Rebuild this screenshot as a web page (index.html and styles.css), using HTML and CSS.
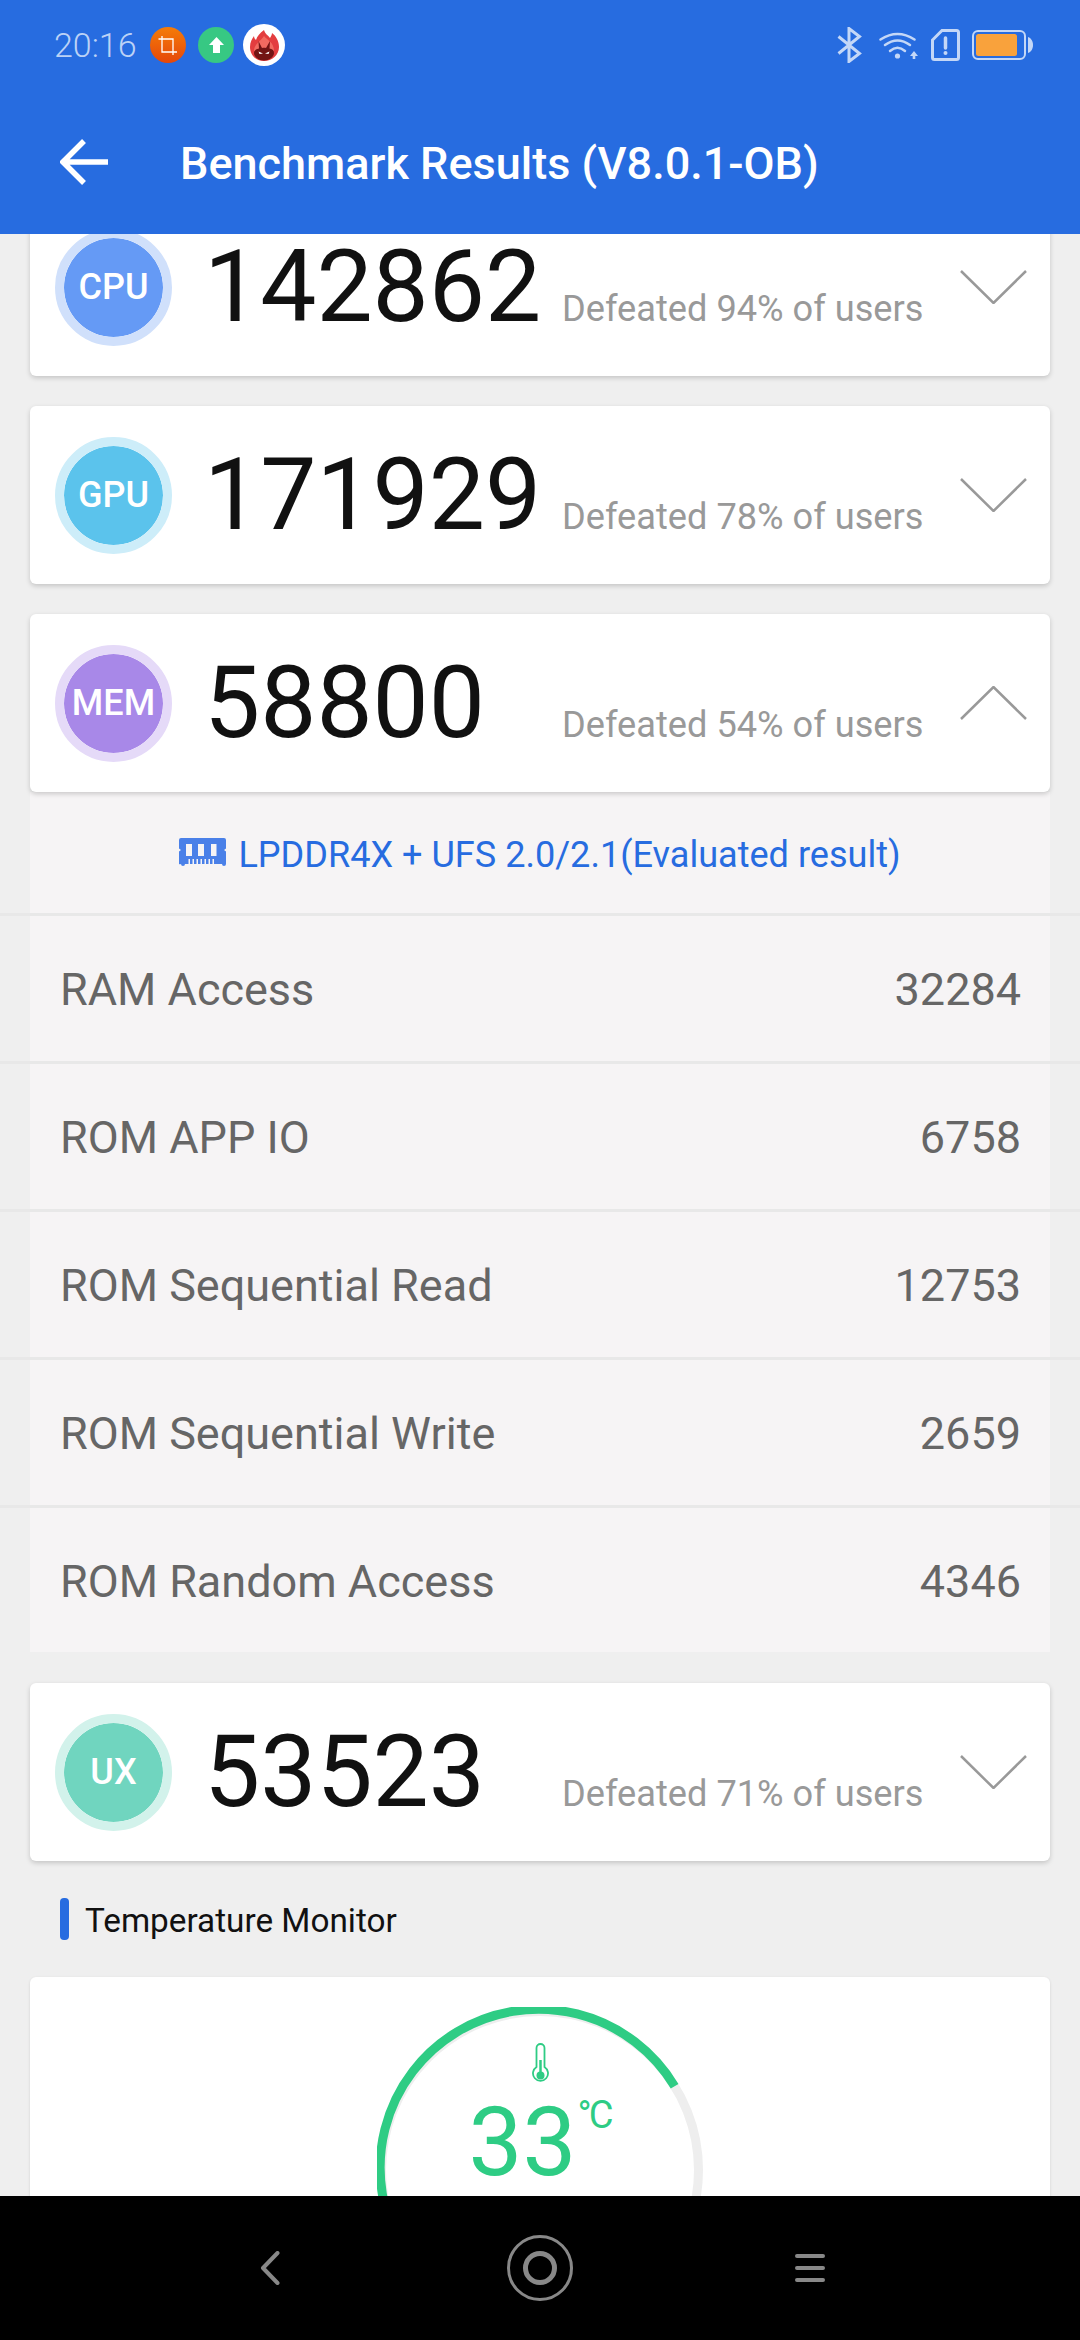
FILE: index.html
```html
<!DOCTYPE html>
<html lang="en">
<head>
<meta charset="utf-8">
<title>Benchmark Results</title>
<link rel="stylesheet" href="styles.css">
</head>
<body>
<div class="app">
  <header class="header">
    <div class="status">
      <span class="time">20:16</span>
      <svg class="ic-crop" viewBox="0 0 36 36"><defs><linearGradient id="og" x1="0" y1="0" x2="0" y2="1"><stop offset="0" stop-color="#f57c08"/><stop offset="1" stop-color="#e5470a"/></linearGradient></defs><circle cx="18" cy="18" r="18" fill="url(#og)"/><path d="M8.500 12H23V28M12 9V25H27" fill="none" stroke="#fff" stroke-width="1.300"/></svg>
      <svg class="ic-up" viewBox="0 0 36 36"><circle cx="18" cy="18" r="18" fill="#37c883"/><path d="M18.500 10l7.500 8h-4v8h-7v-8h-4z" fill="#fff"/></svg>
      <svg class="ic-logo" viewBox="0 0 42 42"><circle cx="21" cy="21" r="21" fill="#fff"/><path d="M21 6C22 10 25 11 27 14C28 12 29 11 29 9C33 12 36 17 36 23C36 31 29 37 21 37C13 37 7 31 7 23C7 18 9 15 11 12C11 14 12 15 13 16C14 12 17 9 21 6Z" fill="#e33d3f"/><path d="M21 12C24 16 31 18 31 27L11 27C11 20 18 17 21 12Z" fill="#f26a60"/><path d="M11 29C11 26 14 25 16 24.500L15.500 17L19 24C20.500 23.700 22 23.700 23 24L27 17L26.500 24.500C29 25 31 26 31 29C31 33 26 36.500 21 36.500C16 36.500 11 33 11 29Z" fill="#731414"/><path d="M15.500 27.500l4.500 2-3.500.5zM26.500 27.500l-4.500 2 3.500.5z" fill="#fff"/></svg>
      <div class="status-right">
        <svg class="ic-bt" viewBox="0 0 25 36"><path d="M1.500 9.500l21 17L12 34.500V1.500l10.500 8-21 17" fill="none" stroke="#c4d7f7" stroke-width="3"/></svg>
        <svg class="ic-wifi" viewBox="0 0 39 28"><g fill="none" stroke="#c4d7f7" stroke-width="2.500" stroke-linecap="round"><path d="M1.500 8.500Q18.500-2.500 35.500 8.500"/><path d="M6 14Q18.500 5 31 14"/><path d="M11 20Q18.500 13.500 26 20"/></g><circle cx="18.500" cy="25" r="2.600" fill="#c4d7f7"/><path d="M35 20l4 5h-2.700v3h-2.600v-3H31z" fill="#c4d7f7"/></svg>
        <svg class="ic-sim" viewBox="0 0 29 32"><path d="M11 1.500h14.500a2 2 0 0 1 2 2v25a2 2 0 0 1-2 2h-22a2 2 0 0 1-2-2V11z" fill="none" stroke="#c4d7f7" stroke-width="3"/><path d="M14.500 9v10" stroke="#c4d7f7" stroke-width="3.500" stroke-linecap="round"/><circle cx="14.500" cy="24" r="2" fill="#c4d7f7"/></svg>
        <svg class="ic-batt" viewBox="0 0 61 30"><rect x="1" y="1" width="52" height="28" rx="5" fill="none" stroke="#c4d7f7" stroke-width="2"/><rect x="4" y="4" width="41" height="22" rx="2.500" fill="#f9a23c"/><path d="M56 7c3 1 5 4 5 8s-2 7-5 8z" fill="#c4d7f7"/></svg>
      </div>
    </div>
    <div class="toolbar">
      <svg class="ic-back" viewBox="0 0 48 48"><path d="M48 24H4M24 3L3 24l21 21" fill="none" stroke="#fff" stroke-width="5.500"/></svg>
      <h1 class="title">Benchmark Results (V8.0.1-OB)</h1>
    </div>
  </header>

  <main class="content">
    <section class="card card-scrolled">
      <div class="badge badge-cpu"><span>CPU</span></div>
      <div class="score"><span class="num">142862</span><span class="defeat">Defeated 94% of users</span></div>
      <svg class="chev" viewBox="0 0 67 34"><path d="M1 1l32.500 32L66 1" fill="none" stroke="#999" stroke-width="2.500"/></svg>
    </section>
    <section class="card">
      <div class="badge badge-gpu"><span>GPU</span></div>
      <div class="score"><span class="num">171929</span><span class="defeat">Defeated 78% of users</span></div>
      <svg class="chev" viewBox="0 0 67 34"><path d="M1 1l32.500 32L66 1" fill="none" stroke="#999" stroke-width="2.500"/></svg>
    </section>
    <section class="card card-open">
      <div class="badge badge-mem"><span>MEM</span></div>
      <div class="score"><span class="num">58800</span><span class="defeat">Defeated 54% of users</span></div>
      <svg class="chev" viewBox="0 0 67 34"><path d="M1 33L33.500 1 66 33" fill="none" stroke="#999" stroke-width="2.500"/></svg>
    </section>

    <div class="details">
      <div class="line-row">
        <div class="mem-type">
          <svg class="ic-mem" viewBox="0 0 47 28"><path d="M2 0h43a2 2 0 0 1 2 2v8.500l-2 1.500 2 1.500V26a2 2 0 0 1-4 0H6a2 2 0 0 1-4 0 2 2 0 0 1-2 0V13.500L2 12 0 10.500V2a2 2 0 0 1 2-2z" fill="#4a80e8"/><g fill="#f6f4f5"><rect x="7" y="6" width="6" height="12"/><rect x="19" y="6" width="6" height="12"/><rect x="32" y="6" width="5.500" height="12"/><rect x="9.500" y="21" width="1.500" height="5"/><rect x="13.500" y="21" width="1.500" height="5"/><rect x="17.500" y="21" width="1.500" height="5"/><rect x="21.500" y="21" width="1.500" height="5"/><rect x="25.500" y="21" width="1.500" height="5"/><rect x="29.500" y="21" width="1.500" height="5"/><rect x="33.500" y="21" width="1.500" height="5"/></g></svg>
          <span>LPDDR4X + UFS 2.0/2.1(Evaluated result)</span>
        </div>
      </div>
      <div class="line-row"><div class="metric"><span>RAM Access</span><span>32284</span></div></div>
      <div class="line-row"><div class="metric"><span>ROM APP IO</span><span>6758</span></div></div>
      <div class="line-row"><div class="metric"><span>ROM Sequential Read</span><span>12753</span></div></div>
      <div class="line-row"><div class="metric"><span>ROM Sequential Write</span><span>2659</span></div></div>
      <div class="line-row line-row-last"><div class="metric"><span>ROM Random Access</span><span>4346</span></div></div>
    </div>

    <section class="card">
      <div class="badge badge-ux"><span>UX</span></div>
      <div class="score"><span class="num">53523</span><span class="defeat">Defeated 71% of users</span></div>
      <svg class="chev" viewBox="0 0 67 34"><path d="M1 1l32.500 32L66 1" fill="none" stroke="#999" stroke-width="2.500"/></svg>
    </section>

    <div class="section-head"><i class="section-bar"></i><span>Temperature Monitor</span></div>

    <section class="temp-card">
      <div class="gauge">
        <svg class="gauge-ring" viewBox="0 0 326 326"><circle cx="163" cy="163" r="158.500" fill="none" stroke="#eee" stroke-width="9"/><path d="M25.700 242.250A158.500 158.500 0 0 1 297.600 79.200" fill="none" stroke="#2ecc84" stroke-width="9"/></svg>
        <div class="gauge-center">
          <svg class="ic-therm" viewBox="0 0 17 42"><path d="M4.500 24V5a4 4 0 0 1 8 0v19a7.500 7.500 0 1 1-8 0z" fill="none" stroke="#2ecc84" stroke-width="1.800"/><path d="M8.500 17v16" stroke="#2ecc84" stroke-width="2.500"/><circle cx="8.500" cy="32.500" r="4" fill="#2ecc84"/></svg>
          <div class="temp-value"><span class="temp-num">33</span><span class="temp-unit">°C</span></div>
        </div>
      </div>
    </section>
  </main>

  <nav class="navbar">
    <svg class="nav-back" viewBox="0 0 20 34"><path d="M17.500 2L3 17l14.500 15" fill="none" stroke="#888" stroke-width="4" stroke-linecap="round" stroke-linejoin="round"/></svg>
    <svg class="nav-home" viewBox="0 0 66 66"><circle cx="33" cy="33" r="31.500" fill="none" stroke="#888" stroke-width="3"/><circle cx="33" cy="33" r="14.500" fill="none" stroke="#888" stroke-width="5"/></svg>
    <svg class="nav-menu" viewBox="0 0 30 28"><g stroke="#888" stroke-width="4" stroke-linecap="round"><path d="M2 2h26M2 14h26M2 26h26"/></g></svg>
  </nav>
</div>
</body>
</html>
```
FILE: styles.css
```css
* { box-sizing: border-box; }
html, body { margin: 0; padding: 0; }
body { font-family: Roboto, "Liberation Sans", sans-serif; background: #efefef; }

.app { width: 1080px; height: 2340px; display: flex; flex-direction: column; overflow: hidden; }

.header { height: 234px; flex: none; background: #276ce0; position: relative; z-index: 2; }
.status { height: 90px; display: flex; align-items: center; padding: 0 47px 0 54px; }
.time { font-size: 34px; font-weight: 300; color: #bcd2f6; width: 96px; }
.ic-crop { width: 36px; height: 36px; }
.ic-up { width: 36px; height: 36px; margin-left: 12px; }
.ic-logo { width: 42px; height: 42px; margin-left: 9px; }
.status-right { margin-left: auto; display: flex; align-items: center; }
.ic-bt { width: 25px; height: 36px; }
.ic-wifi { width: 39px; height: 28px; margin-left: 17px; }
.ic-sim { width: 29px; height: 32px; margin-left: 13px; }
.ic-batt { width: 61px; height: 30px; margin-left: 12px; }

.toolbar { height: 144px; display: flex; align-items: center; padding-left: 60px; }
.ic-back { width: 48px; height: 48px; }
.title { margin: 2px 0 0 72px; font-size: 45px; font-weight: 500; color: #fff; white-space: nowrap; }

.content { flex: 1; min-height: 0; overflow: hidden; padding: 0 30px; }

.card { height: 178px; background: #fff; border-radius: 6px; box-shadow: 0 2px 5px rgba(0,0,0,.18); display: flex; align-items: center; padding: 0 23px 0 25px; margin-bottom: 30px; }
.card-scrolled { margin-top: -36px; }
.card-open { margin-bottom: 0; position: relative; }

.badge { width: 117px; height: 117px; flex: none; border-radius: 50%; border: 9px solid; background-clip: padding-box; display: flex; align-items: center; justify-content: center; color: #fff; font-size: 36px; font-weight: 500; }
.badge-cpu { background-color: #659af5; border-color: #d0e0fb; }
.badge-gpu { background-color: #5bc3ec; border-color: #cdedf9; }
.badge-mem { background-color: #a888e8; border-color: #e5daf8; }
.badge-ux { background-color: #70d5bf; border-color: #d2f2eb; }

.score { display: flex; align-items: baseline; margin-left: 32px; }
.num { width: 358px; font-size: 100px; line-height: 1; color: #111; }
.defeat { font-size: 36.2px; color: #999; white-space: nowrap; }
.chev { width: 67px; height: 34px; margin-left: auto; flex: none; }

.details { margin: 0 -30px 31px; }
.line-row { border-bottom: 3px solid #e8e8e8; }
.line-row-last { border-bottom: 0; }
.mem-type { margin: 0 30px; height: 121px; padding-top: 4px; background: #f6f4f5; display: flex; align-items: center; justify-content: center; gap: 12px; color: #276ce0; font-size: 36.1px; }
.ic-mem { width: 47px; height: 28px; margin-top: -6px; }
.metric { margin: 0 30px; height: 145px; padding: 2px 29px 0 30px; background: #f6f4f5; display: flex; align-items: center; justify-content: space-between; color: #666; font-size: 45px; }
.line-row-last .metric { height: 144px; }

.section-head { display: flex; align-items: center; gap: 16px; height: 42px; margin: 37px 0 37px 30px; font-size: 33.3px; color: #111; }
.section-head span { padding-top: 2px; }
.section-bar { width: 9px; height: 42px; border-radius: 4px; background: #276ce0; }

.temp-card { height: 400px; background: #fff; border-radius: 6px; box-shadow: 0 1px 3px rgba(0,0,0,.12); padding-top: 30px; }
.gauge { width: 326px; height: 326px; margin: 0 auto; position: relative; }
.gauge-ring { width: 326px; height: 326px; display: block; }
.gauge-center { position: absolute; left: 0; right: 0; top: 36px; display: flex; flex-direction: column; align-items: center; }
.ic-therm { width: 17px; height: 42px; }
.temp-value { display: flex; align-items: flex-start; color: #2ecc84; margin: 9px 0 0 2px; }
.temp-num { font-size: 96px; line-height: 96px; }
.temp-unit { font-size: 38px; line-height: 1; letter-spacing: -3px; margin: 2px 3px 0 1px; }

.navbar { height: 144px; flex: none; background: #000; display: flex; align-items: center; padding-left: 260px; position: relative; z-index: 2; }
.nav-back { width: 20px; height: 34px; }
.nav-home { width: 66px; height: 66px; margin-left: 227px; }
.nav-menu { width: 30px; height: 28px; margin-left: 222px; }
```
